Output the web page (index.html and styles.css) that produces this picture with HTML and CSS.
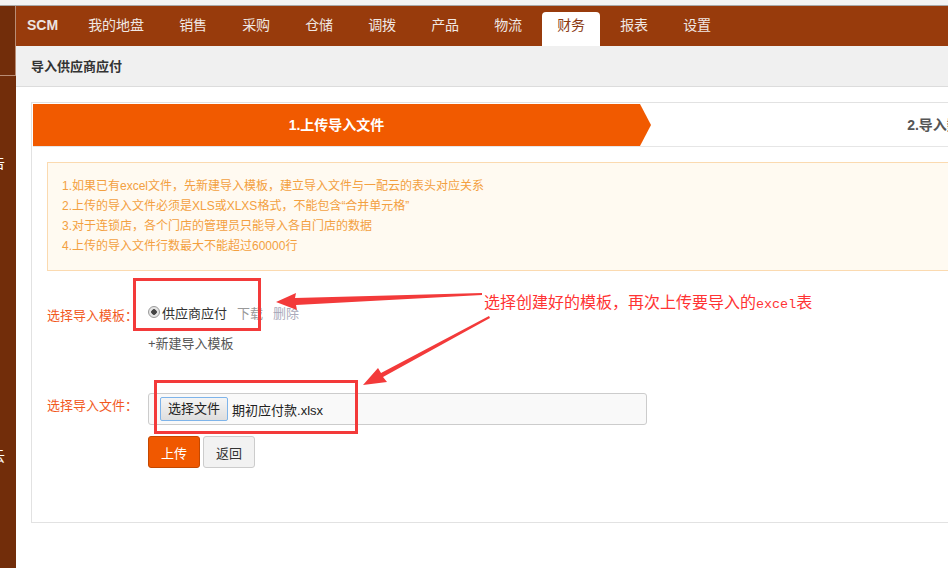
FILE: index.html
```html
<!DOCTYPE html>
<html lang="zh-CN">
<head>
  <meta charset="UTF-8" />
  <title>导入供应商应付</title>
  <link rel="stylesheet" href="styles.css">
</head>
<body>

  <div class="topline"></div>

  <div class="frame">
    <aside class="sidebar">
      <div class="side-top"></div>
      <div class="side-item side-report"><span>报告</span></div>
      <div class="side-item side-cloud"><span>一配云</span></div>
    </aside>

    <div class="main">
      <nav class="navbar">
        <span class="brand">SCM</span>
        <a class="nav-item">我的地盘</a>
        <a class="nav-item">销售</a>
        <a class="nav-item">采购</a>
        <a class="nav-item">仓储</a>
        <a class="nav-item">调拨</a>
        <a class="nav-item">产品</a>
        <a class="nav-item">物流</a>
        <a class="nav-item active">财务</a>
        <a class="nav-item">报表</a>
        <a class="nav-item">设置</a>
      </nav>

      <div class="subhead">导入供应商应付</div>

      <div class="content">
        <div class="panel">
          <div class="steps">
            <div class="step step-on">1.上传导入文件</div>
            <div class="step step-next">2.导入数据</div>
          </div>

          <div class="panel-body">
            <div class="notice">
              <p>1.如果已有excel文件，先新建导入模板，建立导入文件与一配云的表头对应关系</p>
              <p>2.上传的导入文件必须是XLS或XLXS格式，不能包含“合并单元格”</p>
              <p>3.对于连锁店，各个门店的管理员只能导入各自门店的数据</p>
              <p>4.上传的导入文件行数最大不能超过60000行</p>
            </div>

            <div class="form-row row-template">
              <label class="form-label">选择导入模板：</label>
              <div class="form-field">
                <div class="tpl-line"><span class="radio"></span><span>供应商应付</span><a class="link-down">下载</a><a class="link-del">删除</a></div>
                <div class="tpl-line"><a class="link-add">+新建导入模板</a></div>
              </div>
            </div>

            <div class="form-row row-file">
              <label class="form-label">选择导入文件：</label>
              <div class="file-box">
                <span class="file-btn">选择文件</span>
                <span class="file-name">期初应付款.xlsx</span>
              </div>
            </div>

            <div class="actions">
              <button class="btn btn-primary">上传</button>
              <button class="btn">返回</button>
            </div>
          </div>
        </div>
      </div>
    </div>
  </div>

  <!-- screenshot annotations -->
  <svg class="marks" width="948" height="568" viewBox="0 0 948 568">
    <rect x="134.5" y="279.5" width="125" height="50" fill="none" stroke="#f33a3a" stroke-width="3"/>
    <rect x="155.5" y="381.5" width="201" height="51" fill="none" stroke="#f33a3a" stroke-width="3"/>
    <polygon points="276,302 296,293 295,298 482,293 482,295 296,305 297,310" fill="#f33a3a"/>
    <polygon points="363,385 378,368 381,373 489,316 490,318 383,377 387,382" fill="#f33a3a"/>
  </svg>
  <div class="note">选择创建好的模板，再次上传要导入的<span class="mono">excel</span>表</div>

</body>
</html>
```

FILE: styles.css
```css
body {
  margin: 0;
  width: 948px;
  height: 568px;
  overflow: hidden;
  position: relative;
  font-family: "Liberation Sans", "Noto Sans CJK SC", sans-serif;
  font-size: 13px;
  color: #333;
  background: #fff;
}

a {
  text-decoration: none;
  cursor: pointer;
}

.topline {
  height: 5px;
  background: #f3f3f3;
  border-bottom: 1px solid #a9a9a9;
}

.frame {
  display: flex;
  height: 562px;
}

/* left menu, mostly cut off */
.sidebar {
  flex: 0 0 16px;
  background: #722d0a;
  overflow: hidden;
  color: #fff;
  font-size: 14px;
}

.side-top {
  height: 69px;
  border-right: 1px solid #b98c74;
  border-bottom: 1px solid #b98c74;
}

.side-item {
  display: flex;
  justify-content: flex-end;
  height: 16px;
  line-height: 16px;
  white-space: nowrap;
}

.side-item span {
  margin-right: 11px;
}

.side-report {
  margin-top: 79px;
}

.side-cloud {
  margin-top: 277px;
}

.main {
  flex: 1;
  min-width: 0;
  overflow: hidden;
}

/* top navigation */
.navbar {
  display: flex;
  align-items: flex-end;
  height: 40px;
  background: #983b0c;
  white-space: nowrap;
}

.brand {
  align-self: center;
  padding: 0 30px 0 11px;
  font-size: 14px;
  font-weight: bold;
  color: #ece4e0;
  line-height: 20px;
  margin-top: -2px;
}

.nav-item {
  height: 34px;
  line-height: 26px;
  padding: 0 15px;
  margin-right: 5px;
  font-size: 14px;
  color: #f0e8e4;
}

.nav-item:first-of-type {
  padding-left: 0;
}

.nav-item.active {
  background: #fff;
  color: #8b3a12;
  border-radius: 4px 4px 0 0;
}

.subhead {
  height: 40px;
  line-height: 41px;
  padding-left: 15px;
  background: #f0f0f0;
  border-bottom: 1px solid #dcdcdc;
  font-size: 13px;
  font-weight: bold;
  color: #333;
}

.content {
  padding: 15px 0 0 15px;
}

.panel {
  width: 1230px;
  border: 1px solid #e2e2e2;
}

/* wizard steps */
.steps {
  display: flex;
  height: 42px;
  margin: 1px 1px 0;
  border-bottom: 1px solid #e6e6e6;
}

.step {
  line-height: 42px;
  text-align: center;
  font-size: 14px;
  font-weight: bold;
  color: #555;
  box-sizing: border-box;
}

.step-on {
  flex: 0 0 618px;
  padding-right: 11px;
  background: #f15a00;
  color: #fff;
  clip-path: polygon(0 0, calc(100% - 11px) 0, 100% 50%, calc(100% - 11px) 100%, 0 100%);
}

.step-next {
  flex: 0 0 580px;
}

.panel-body {
  padding: 15px 15px 54px;
}

.notice {
  padding: 13px 14px 14px;
  background: #fffaf1;
  border: 1px solid #fbdab0;
}

.notice p {
  margin: 0;
  font-size: 12px;
  line-height: 20px;
  color: #f3a040;
}

/* form */
.form-row {
  display: flex;
  align-items: flex-start;
}

.form-label {
  flex: 0 0 101px;
  font-size: 13px;
  line-height: 20px;
  color: #f2591e;
}

.row-template {
  margin-top: 26px;
}

.row-template .form-label {
  margin-top: 9px;
}

.tpl-line {
  display: flex;
  align-items: center;
  height: 30px;
  font-size: 13px;
  color: #333;
}

.radio {
  width: 10px;
  height: 10px;
  margin-right: 2px;
  border: 1px solid #9a9a9a;
  border-radius: 50%;
  background: radial-gradient(circle, #444 0 2.5px, #e4e4e4 3px);
}

.link-down {
  margin-left: 10px;
  color: #999;
}

.link-del {
  margin-left: 10px;
  color: #aab;
}

.link-add {
  color: #555;
}

.row-file {
  margin-top: 36px;
}

.row-file .form-label {
  margin-top: 3px;
}

.file-box {
  display: flex;
  align-items: center;
  width: 499px;
  height: 32px;
  box-sizing: border-box;
  padding-left: 11px;
  background: #f9f9f9;
  border: 1px solid #ccc;
  border-radius: 3px;
}

.file-btn {
  height: 24px;
  line-height: 22px;
  box-sizing: border-box;
  padding: 0 7px;
  background: linear-gradient(#f5f5f5, #dedede);
  border: 1px solid #7eb4ea;
  border-radius: 2px;
  font-size: 13px;
  color: #222;
}

.file-name {
  margin-left: 4px;
  font-size: 13px;
  color: #222;
}

.actions {
  display: flex;
  margin: 11px 0 0 101px;
}

.btn {
  height: 32px;
  padding: 0 12px;
  margin-right: 3px;
  font-family: inherit;
  font-size: 13px;
  color: #333;
  background: #f2f2f2;
  border: 1px solid #ccc;
  border-radius: 3px;
}

.btn-primary {
  background: #f05800;
  border-color: #c44800;
  color: #fff;
}

/* red callouts drawn on the screenshot */
.marks {
  position: absolute;
  top: 0;
  left: 0;
  pointer-events: none;
}

.note {
  position: absolute;
  left: 484px;
  top: 291px;
  line-height: 20px;
  font-family: "Noto Sans CJK SC", sans-serif;
  font-size: 16px;
  color: #ff3333;
  white-space: nowrap;
}

.note .mono {
  font-family: "Liberation Mono", monospace;
  font-size: 13.4px;
}
```
